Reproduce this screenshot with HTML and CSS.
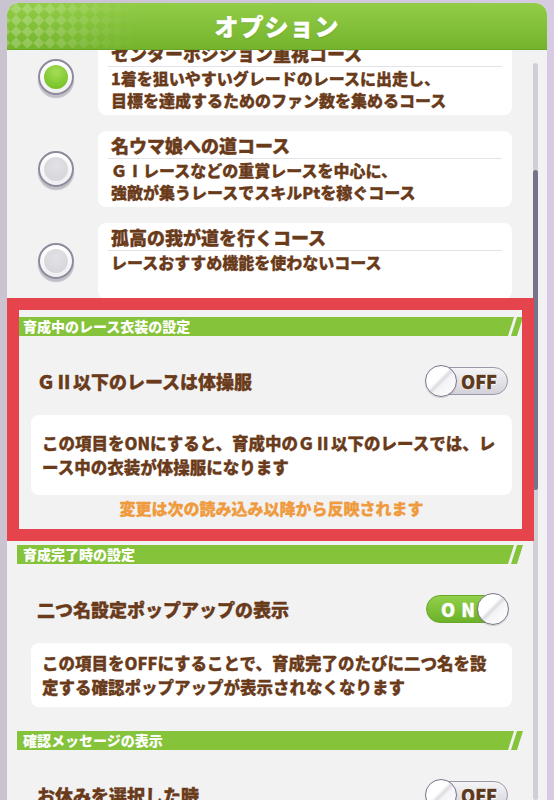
FILE: index.html
```html
<!DOCTYPE html>
<html lang="ja">
<head>
<meta charset="utf-8">
<title>オプション</title>
<link rel="stylesheet" href="styles.css">
</head>
<body>
<div class="panel">
  <header class="head">
    <div class="head-deco"><span class="head-pattern"></span></div>
    <h1 class="head-title">オプション</h1>
  </header>
  <div class="content">
    <div class="scroll">
      <div class="courses">
        <div class="course">
          <span class="radio radio-on"></span>
          <div class="ccard">
            <div class="ctitle">センターポジション重視コース</div>
            <div class="cdesc">1着を狙いやすいグレードのレースに出走し、<br>目標を達成するためのファン数を集めるコース</div>
          </div>
        </div>
        <div class="course">
          <span class="radio"></span>
          <div class="ccard">
            <div class="ctitle">名ウマ娘への道コース</div>
            <div class="cdesc">ＧⅠレースなどの重賞レースを中心に、<br>強敵が集うレースでスキルPtを稼ぐコース</div>
          </div>
        </div>
        <div class="course">
          <span class="radio"></span>
          <div class="ccard">
            <div class="ctitle">孤高の我が道を行くコース</div>
            <div class="cdesc">レースおすすめ機能を使わないコース</div>
          </div>
        </div>
      </div>

      <section class="sect sect-first">
        <div class="bar"><span class="bar-label">育成中のレース衣装の設定</span><span class="bar-tip"></span></div>
        <div class="setrow">
          <span class="setlabel">ＧⅡ以下のレースは体操服</span>
          <span class="toggle toggle-off"><span class="knob"></span><span class="tlabel">OFF</span></span>
        </div>
        <div class="info info-tall">この項目をONにすると、育成中のＧⅡ以下のレースでは、レ<br>ース中の衣装が体操服になります</div>
        <p class="notice">変更は次の読み込み以降から反映されます</p>
      </section>

      <section class="sect sect-second">
        <div class="bar"><span class="bar-label">育成完了時の設定</span><span class="bar-tip"></span></div>
        <div class="setrow">
          <span class="setlabel">二つ名設定ポップアップの表示</span>
          <span class="toggle toggle-on"><span class="tlabel">ON</span><span class="knob"></span></span>
        </div>
        <div class="info info-short">この項目をOFFにすることで、育成完了のたびに二つ名を設<br>定する確認ポップアップが表示されなくなります</div>
      </section>

      <section class="sect sect-third">
        <div class="bar"><span class="bar-label">確認メッセージの表示</span><span class="bar-tip"></span></div>
        <div class="setrow">
          <span class="setlabel">お休みを選択した時</span>
          <span class="toggle toggle-off"><span class="knob"></span><span class="tlabel">OFF</span></span>
        </div>
      </section>
    </div>
    <div class="scrollbar"><div class="thumb"></div></div>
  </div>
</div>
<div class="annot"></div>
</body>
</html>
```

FILE: styles.css
```css
html, body {
  margin: 0;
  padding: 0;
}
body {
  position: relative;
  height: 800px;
  overflow: hidden;
  background: linear-gradient(90deg, #c9c4d0 0, #c9c4d0 8px, #d6cbe3 540px, #d6cbe3 100%);
  font-family: "Noto Sans CJK JP", "Noto Sans", sans-serif;
  color: #6a3b1a;
}
.panel {
  margin: 3px 7px 0 7px;
  height: 797px;
  background: #f2f2f3;
  border-radius: 12px 12px 0 0;
  overflow: hidden;
  display: flex;
  flex-direction: column;
}
.head {
  position: relative;
  flex: none;
  height: 47px;
  background: linear-gradient(#93cd48, #74b42c);
  border-bottom: 1px solid #68a626;
  box-sizing: border-box;
}
.head-deco {
  position: absolute;
  left: 0;
  top: 0;
  width: 130px;
  height: 46px;
  overflow: hidden;
  -webkit-mask-image: linear-gradient(90deg, #000 20%, transparent 100%);
  mask-image: linear-gradient(90deg, #000 20%, transparent 100%);
}
.head-pattern {
  position: absolute;
  left: -60px;
  top: -80px;
  width: 240px;
  height: 240px;
  transform: rotate(45deg);
  background: repeating-conic-gradient(rgba(255,255,255,0.22) 0 25%, transparent 0 50%) 0 0 / 16px 16px;
}
.head-title {
  position: relative;
  margin: 0;
  text-align: center;
  font-size: 24px;
  line-height: 46px;
  font-weight: 900;
  color: #fff;
  letter-spacing: 1px;
  -webkit-text-stroke: 0.4px #fff;
  text-shadow: 0 1px 1px rgba(60,100,20,0.35);
}
.content {
  position: relative;
  flex: 1;
  overflow: hidden;
}
.scroll {
  margin-top: -11px;
}
.courses {
  display: flex;
  flex-direction: column;
  gap: 16px;
}
.course {
  display: flex;
  align-items: center;
  gap: 24px;
  padding: 0 35px 0 31px;
}
.radio {
  flex: none;
  width: 36px;
  height: 36px;
  box-sizing: border-box;
  border-radius: 50%;
  background: linear-gradient(#ffffff, #efeff3);
  border: 2px solid #8f8b9d;
  box-shadow: 0 3px 1px rgba(115,110,130,0.4);
  display: flex;
  align-items: center;
  justify-content: center;
}
.radio::before {
  content: "";
  width: 24px;
  height: 24px;
  border-radius: 50%;
  background: radial-gradient(circle at 50% 35%, #e2e2e6, #d2d2d8);
}
.radio-on::before {
  background: radial-gradient(circle at 50% 30%, #a6de56, #7cc52c 70%, #6cb224);
}
.ccard {
  flex: 1;
  height: 76px;
  box-sizing: border-box;
  padding: 3px 10px 0 10px;
  background: #fff;
  border-radius: 8px;
}
.ctitle {
  font-size: 18px;
  line-height: 22px;
  padding-bottom: 2px;
  font-weight: 900;
  padding-left: 3px;
  border-bottom: 1px solid #e2e2e8;
  white-space: nowrap;
  -webkit-text-stroke: 0.35px currentColor;
}
.cdesc {
  font-size: 16px;
  line-height: 22px;
  font-weight: 900;
  padding-left: 3px;
  white-space: nowrap;
  -webkit-text-stroke: 0.3px currentColor;
}
.sect-first { margin-top: 18px; }
.sect-second { margin-top: 25px; }
.sect-third { margin-top: 24px; }
.bar {
  display: flex;
  height: 19px;
  margin: 0 24px 0 10px;
}
.bar-label {
  flex: 1;
  background: #85c33b;
  color: #fff;
  font-size: 14px;
  line-height: 19px;
  font-weight: 900;
  padding-left: 6px;
  clip-path: polygon(0 0, 100% 0, calc(100% - 6px) 100%, 0 100%);
}
.bar-tip {
  flex: none;
  width: 12px;
  margin-left: -3px;
  background: #85c33b;
  clip-path: polygon(6px 0, 100% 0, 6px 100%, 0 100%);
}
.setrow {
  display: flex;
  align-items: center;
  justify-content: space-between;
  height: 62px;
  margin-top: 14px;
  padding: 0 39px 0 30px;
}
.setlabel {
  font-size: 18px;
  font-weight: 900;
  line-height: 24px;
  white-space: nowrap;
  -webkit-text-stroke: 0.35px currentColor;
}
.toggle {
  position: relative;
  flex: none;
  width: 82px;
  height: 28px;
  box-sizing: border-box;
  border-radius: 14px;
  display: flex;
  align-items: center;
}
.toggle-off {
  background: linear-gradient(#f5f5f7, #d3d2d9);
  border: 1.5px solid #9c98aa;
}
.toggle-on {
  background: linear-gradient(#92d049, #6db22a);
  border: 1.5px solid #68a828;
}
.knob {
  position: absolute;
  top: 50%;
  width: 32px;
  height: 32px;
  margin-top: -16px;
  box-sizing: border-box;
  border-radius: 50%;
  border: 1.5px solid #7b768c;
  background: linear-gradient(135deg, #ffffff 0, #ffffff 42%, #dcdce2 50%, #f4f4f6 58%, #ffffff 100%);
  box-shadow: 0 1px 1px rgba(0,0,0,0.15);
}
.toggle-off .knob { left: -2px; }
.toggle-on .knob { right: -2px; }
.tlabel {
  font-size: 18px;
  font-weight: 900;
  line-height: 1;
}
.toggle-off .tlabel {
  padding-left: 34px;
  color: #5c391c;
  -webkit-text-stroke: 0.4px #5c391c;
  text-shadow: 1px 0 0 #fff, -1px 0 0 #fff, 0 1px 0 #fff, 0 -1px 0 #fff;
}
.toggle-on .tlabel {
  padding-left: 14px;
  color: #fff;
  letter-spacing: 6px;
  -webkit-text-stroke: 0.3px #fff;
}
.info {
  display: flex;
  align-items: center;
  margin: 3px 35px 0 24px;
  padding: 0 11px;
  background: #fff;
  border-radius: 8px;
  font-size: 16.5px;
  line-height: 24px;
  font-weight: 900;
  white-space: nowrap;
  -webkit-text-stroke: 0.3px currentColor;
}
.info-tall { height: 80px; }
.info-short { height: 64px; }
.notice {
  margin: 1px 35px 0 24px;
  text-align: center;
  color: #ef9a3c;
  font-size: 16px;
  line-height: 24px;
  font-weight: 900;
  -webkit-text-stroke: 0.3px currentColor;
}
.scrollbar {
  position: absolute;
  right: 9px;
  top: 13px;
  bottom: 0;
  width: 5px;
  background: #d0ced7;
  border-radius: 3px;
}
.thumb {
  margin-top: 107px;
  height: 320px;
  background: #77738a;
  border-radius: 3px;
}
.annot {
  position: absolute;
  left: 7px;
  top: 298px;
  width: 527px;
  height: 243px;
  box-sizing: border-box;
  border: 12px solid #e5444c;
}
```
